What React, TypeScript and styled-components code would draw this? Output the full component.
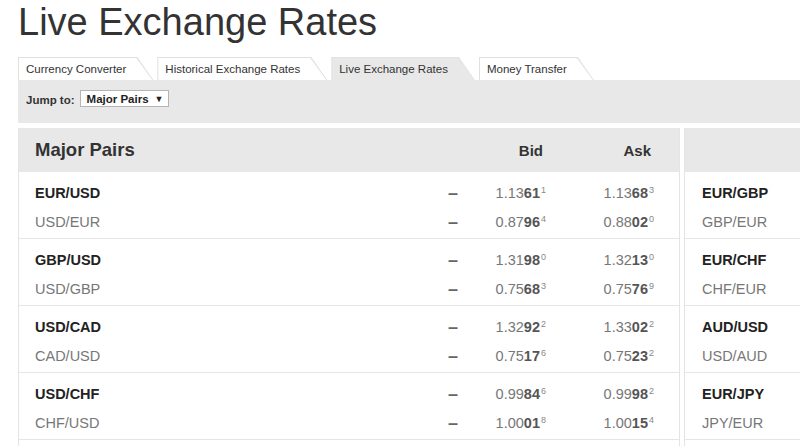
import styled, { createGlobalStyle } from "styled-components";

const GlobalStyle = createGlobalStyle`
  html, body {
    margin: 0;
    padding: 0;
    background: #fff;
    overflow: hidden;
  }
  body {
    font-family: "Liberation Sans", Arial, sans-serif;
    color: #333;
  }
`;

const Page = styled.main`
  width: 1000px;
  padding-left: 18px;
`;

const Title = styled.h1`
  margin: 3px 0 16px;
  font-size: 38px;
  line-height: 38px;
  font-weight: 400;
  color: #333;
`;

const TabRow = styled.nav`
  display: flex;
  gap: 4px;
  height: 23px;
`;

const Tab = styled.div<{ $active?: boolean }>`
  display: flex;
  padding: 1px 1px 0 1px;
  background: ${(p) => (p.$active ? "#e3e3e3" : "#e0e0e0")};
  clip-path: polygon(0 0, calc(100% - 16px) 0, 100% 100%, 0 100%);

  span {
    display: flex;
    align-items: center;
    padding: 0 26px 0 7px;
    font-size: 11.5px;
    color: #333;
    background: ${(p) => (p.$active ? "#e8e8e8" : "#fff")};
    clip-path: polygon(0 0, calc(100% - 16px) 0, 100% 100%, 0 100%);
  }
`;

const JumpBar = styled.section`
  height: 43px;
  display: flex;
  align-items: flex-start;
  gap: 5px;
  padding: 10px 0 0 8px;
  box-sizing: border-box;
  background: #e8e8e8;
  font-size: 11.5px;
  font-weight: 700;
  color: #333;

  label {
    line-height: 21px;
  }
`;

const Select = styled.div`
  height: 17px;
  display: flex;
  align-items: center;
  padding: 0 5px 0 6px;
  background: #fff;
  border: 1px solid #b5b5b5;
  box-sizing: border-box;
  font-size: 11.5px;
  font-weight: 700;
  color: #222;

  small {
    font-size: 9px;
    margin-left: 6px;
  }
`;

const Panels = styled.div`
  display: flex;
  gap: 4px;
  margin-top: 5px;
`;

const Panel = styled.section<{ $width: number }>`
  flex: 0 0 ${(p) => p.$width}px;
  border-left: 1px solid #e4e4e4;
  border-right: 1px solid #e4e4e4;
  box-sizing: border-box;
`;

const Grid = styled.div`
  display: grid;
  grid-template-columns: 1fr 20px 83px 108px;
  align-items: center;
  padding: 0 25px 0 16px;
`;

const Header = styled(Grid)`
  height: 44px;
  background: #e8e8e8;
  color: #333;
  font-weight: 700;
  font-size: 15px;

  h2 {
    margin: 0;
    font-size: 18.5px;
    font-weight: 700;
  }
  span {
    text-align: right;
    padding-right: 3px;
  }
`;

const Group = styled.div`
  padding: 6px 0 2px;
  border-bottom: 1px solid #e6e6e6;
`;

const Row = styled(Grid)`
  height: 29px;
  font-size: 14.5px;
`;

const PairName = styled.span<{ $main?: boolean }>`
  font-weight: ${(p) => (p.$main ? 700 : 400)};
  color: ${(p) => (p.$main ? "#222" : "#777")};
`;

const Dash = styled.span`
  text-align: center;
  font-size: 18px;
  line-height: 1;
  font-weight: 700;
  color: #666;
`;

const Price = styled.span`
  text-align: right;
  color: #777;
  white-space: nowrap;

  b {
    color: #555;
  }
  sup {
    font-size: 9px;
    color: #888;
    vertical-align: 5px;
    line-height: 0;
    margin-left: 1px;
  }
`;

const SideRow = styled.div<{ $main?: boolean }>`
  height: 29px;
  display: flex;
  align-items: center;
  padding-left: 17px;
  font-size: 14.5px;
  font-weight: ${(p) => (p.$main ? 700 : 400)};
  color: ${(p) => (p.$main ? "#222" : "#777")};
`;

const Tail = styled.div`
  height: 20px;
`;

type Quote = [string, string, string];

interface Pair {
  name: string;
  bid: Quote;
  ask: Quote;
}

const groups: Pair[][] = [
  [
    { name: "EUR/USD", bid: ["1.13", "61", "1"], ask: ["1.13", "68", "3"] },
    { name: "USD/EUR", bid: ["0.87", "96", "4"], ask: ["0.88", "02", "0"] },
  ],
  [
    { name: "GBP/USD", bid: ["1.31", "98", "0"], ask: ["1.32", "13", "0"] },
    { name: "USD/GBP", bid: ["0.75", "68", "3"], ask: ["0.75", "76", "9"] },
  ],
  [
    { name: "USD/CAD", bid: ["1.32", "92", "2"], ask: ["1.33", "02", "2"] },
    { name: "CAD/USD", bid: ["0.75", "17", "6"], ask: ["0.75", "23", "2"] },
  ],
  [
    { name: "USD/CHF", bid: ["0.99", "84", "6"], ask: ["0.99", "98", "2"] },
    { name: "CHF/USD", bid: ["1.00", "01", "8"], ask: ["1.00", "15", "4"] },
  ],
];

const sideGroups = [
  ["EUR/GBP", "GBP/EUR"],
  ["EUR/CHF", "CHF/EUR"],
  ["AUD/USD", "USD/AUD"],
  ["EUR/JPY", "JPY/EUR"],
];

const tabs = [
  "Currency Converter",
  "Historical Exchange Rates",
  "Live Exchange Rates",
  "Money Transfer",
];

const PriceCell = ({ q }: { q: Quote }) => (
  <Price>
    {q[0]}
    <b>{q[1]}</b>
    <sup>{q[2]}</sup>
  </Price>
);

const App = () => {
  return (
    <Page>
      <GlobalStyle />
      <Title>Live Exchange Rates</Title>
      <TabRow>
        {tabs.map((t) => (
          <Tab key={t} $active={t === "Live Exchange Rates"}>
            <span>{t}</span>
          </Tab>
        ))}
      </TabRow>
      <JumpBar>
        <label>Jump to:</label>
        <Select>
          Major Pairs<small>▼</small>
        </Select>
      </JumpBar>
      <Panels>
        <Panel $width={662}>
          <Header>
            <h2>Major Pairs</h2>
            <div />
            <span>Bid</span>
            <span>Ask</span>
          </Header>
          {groups.map((g) => (
            <Group key={g[0].name}>
              {g.map((p, i) => (
                <Row key={p.name}>
                  <PairName $main={i === 0}>{p.name}</PairName>
                  <Dash>–</Dash>
                  <PriceCell q={p.bid} />
                  <PriceCell q={p.ask} />
                </Row>
              ))}
            </Group>
          ))}
          <Tail />
        </Panel>
        <Panel $width={300}>
          <Header as="div" />
          {sideGroups.map((g) => (
            <Group key={g[0]}>
              <SideRow $main>{g[0]}</SideRow>
              <SideRow>{g[1]}</SideRow>
            </Group>
          ))}
          <Tail />
        </Panel>
      </Panels>
    </Page>
  );
};

export default App;
